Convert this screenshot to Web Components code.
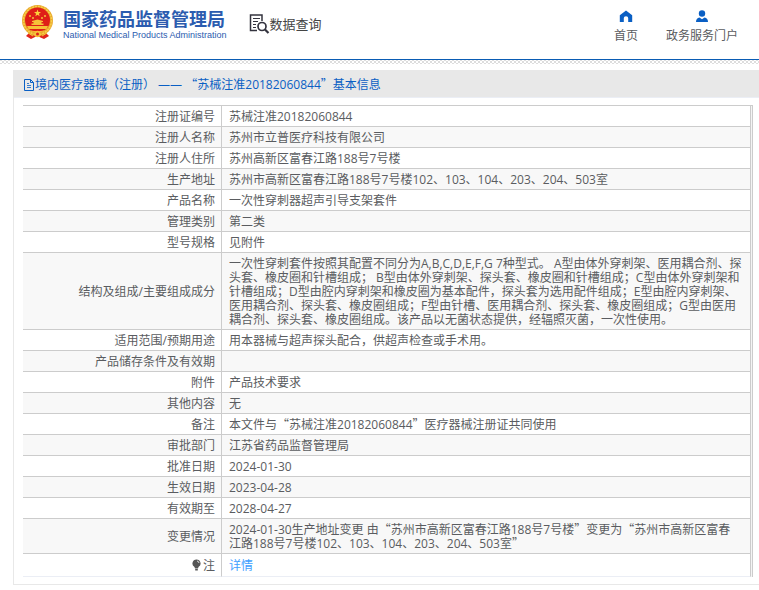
<!DOCTYPE html>
<html lang="zh-CN">
<head>
<meta charset="utf-8">
<title>国家药品监督管理局 - 数据查询</title>
<style>
body {
  margin: 0;
  background: #fff;
  color: #5a5c60;
  font: 12px/14px "Open Sans", "Noto Sans CJK SC", sans-serif;
}
</style>
</head>
<body>
<site-header>
  <nav-link slot="nav" icon="home">首页</nav-link>
  <nav-link slot="nav" icon="user">政务服务门户</nav-link>
</site-header>
<info-panel>
  <span slot="title">境内医疗器械（注册） —— “苏械注准20182060844”基本信息</span>
  <detail-table></detail-table>
</info-panel>

<script>
/* Quotes are full width in Chinese text, so they take the CJK font */
const wideQuotes = text => text.replace(/[“”]/g, '<span class="quote">$&</span>');

const ICONS = {
  home: '<path d="M7 0.5 L0.8 5.2 V12 H4.8 V8 Q4.8 6.2 7 6.2 T9.2 8 V12 H13.2 V5.2 Z"/>',
  user: '<circle cx="7" cy="3.5" r="3.2"/><path d="M1 12 Q1 8 4.5 7.4 L7 9.2 L9.5 7.4 Q13 8 13 12 Z"/>'
};

/* Site Header */

class SiteHeader extends HTMLElement {
  constructor() {
    super();
    this.attachShadow({mode: 'open'}).innerHTML = `
<style>
:host {
  display: block;
}
header {
  display: flex;
  align-items: flex-start;
  height: 59px;
  padding: 0 21px 0 21px;
  box-sizing: border-box;
}
.brand {
  display: flex;
  align-items: flex-start;
  gap: 9px;
  padding-top: 4px;
  color: #2c5caf;
  text-decoration: none;
}
.brand svg {
  width: 33px;
  height: 36px;
}
.name {
  display: block;
  padding-top: 4px;
  font: bold 18px/20px "Noto Sans CJK SC", sans-serif;
}
.english {
  display: block;
  font: 9px/14px "Liberation Sans", sans-serif;
}
.search {
  display: flex;
  align-items: center;
  margin: 0 0 0 22px;
  padding-top: 13px;
  color: #444;
  font: 13px/20px "Noto Sans CJK SC", sans-serif;
}
.search svg {
  width: 21px;
  height: 21px;
}
nav {
  display: flex;
  gap: 28px;
  margin-left: auto;
  padding-top: 10px;
}
.rule {
  height: 4px;
  border-top: 1px solid #0a5cb4;
  background: conic-gradient(#ddd 25%, #fff 0 50%, #ddd 0 75%, #fff 0) 0 1px / 4px 4px;
}
</style>
<header>
  <a class="brand" href="#">
    <svg viewBox="0 0 33 36" aria-hidden="true">
      <path d="M9 28 L5 32 L10 35 L16 32 L23 35 L28 32 L24 28 Z" fill="#df251c"/>
      <circle cx="16.500" cy="16.500" r="15.500" fill="#e9a72c"/>
      <circle cx="16.500" cy="16.500" r="14" fill="none" stroke="#f7d04a" stroke-width="1.500" stroke-dasharray="2 1"/>
      <circle cx="16.500" cy="16" r="12.500" fill="#df1f18"/>
      <path d="M16.500 5.500 l.9 2.500 2.600 .1 -2.100 1.600 .8 2.500 -2.200-1.500 -2.200 1.500 .8-2.500 -2.100-1.600 2.600-.1z" fill="#fbd33c"/>
      <g fill="#f6c238">
        <circle cx="9" cy="12" r="1"/><circle cx="12" cy="14" r="1"/>
        <circle cx="21" cy="14" r="1"/><circle cx="24" cy="12" r="1"/>
        <path d="M11 17 L16.500 15.500 L22 17 V18 H20.500 V19.500 H22.500 V21 H10.500 V19.500 H12.500 V18 H11 Z"/>
        <path d="M6 22 H27 L25.500 25 H7.500 Z"/>
      </g>
      <path d="M10 27 Q16.500 29 23 27" fill="none" stroke="#f6c238"/>
      <circle cx="16.500" cy="30" r="3.200" fill="#f6c238"/>
      <circle cx="16.500" cy="30" r="1.500" fill="#df1f18"/>
      <path d="M7 29 L12 32 M26 29 L21 32" stroke="#f6c238"/>
    </svg>
    <span>
      <span class="name">国家药品监督管理局</span>
      <span class="english">National Medical Products Administration</span>
    </span>
  </a>
  <h1 class="search">
    <svg viewBox="0 0 21 21" fill="none" stroke="#34343f" aria-hidden="true">
      <path d="M13 8 V2 H1.500 V17.500 H8" stroke-width="1.500"/>
      <path d="M4 5.500 H11 M4 8.500 H9 M4 11.500 H7 M4 14.500 H7"/>
      <circle cx="13" cy="13.500" r="4" stroke-width="1.700"/>
      <path d="M16 16.500 L19.500 20" stroke-width="2.200"/>
    </svg>
    数据查询
  </h1>
  <nav><slot name="nav"></slot></nav>
</header>
<div class="rule"></div>`;
  }
}

/* Icon above a caption, in the header */

class NavLink extends HTMLElement {
  constructor() {
    super();
    this.attachShadow({mode: 'open'}).innerHTML = `
<style>
:host {
  display: block;
}
a {
  display: flex;
  flex-direction: column;
  align-items: center;
  gap: 4px;
  color: inherit;
  line-height: 18px;
  text-decoration: none;
}
svg {
  width: 14px;
  height: 13px;
  fill: #0a5fc4;
}
</style>
<a href="#">
  <svg viewBox="0 0 14 13" aria-hidden="true">${ICONS[this.getAttribute('icon')]}</svg>
  <slot></slot>
</a>`;
  }
}

/* Panel with a grey title bar */

class InfoPanel extends HTMLElement {
  constructor() {
    super();
    this.attachShadow({mode: 'open'}).innerHTML = `
<style>
:host {
  display: block;
  margin: 6px 0 5px 13px;
  border: 1px solid #e8e8e8;
  border-width: 0 0 1px 1px;
}
h2 {
  display: flex;
  align-items: center;
  margin: 0;
  padding: 2px 10px 0 9px;
  height: 28px;
  background: #e8e8e8;
  border-bottom: 1px solid #ebeef5;
  box-sizing: border-box;
  color: #0a5fc4;
  font: inherit;
}
h2 svg {
  width: 12px;
  height: 12px;
  fill: none;
  stroke: #0a5fc4;
}
.body {
  padding: 7px 6px 7px 9px;
}
::slotted(span) {
  white-space: pre;
}
</style>
<h2>
  <svg viewBox="0 0 12 12" aria-hidden="true">
    <path d="M1.500 .5 H7.500 L10.500 3.500 V11.500 H1.500 Z M7.500 .5 V3.500 H10.500"/>
    <path d="M4 4.500 H6 M4 6.500 H8 M4 8.500 H8" stroke-opacity=".8"/>
  </svg>
  <slot name="title"></slot>
</h2>
<div class="body"><slot></slot></div>`;
  }

  connectedCallback() {
    const title = this.querySelector('[slot=title]');
    title.innerHTML = wideQuotes(title.textContent);
    title.querySelectorAll('.quote').forEach(quote => {
      quote.style.fontFamily = '"Noto Sans CJK SC", sans-serif';
      quote.style.lineHeight = '0';
    });
  }
}

/* Table of the registration's fields */

const ROWS = [
  ['注册证编号', '苏械注准20182060844'],
  ['注册人名称', '苏州市立普医疗科技有限公司'],
  ['注册人住所', '苏州高新区富春江路188号7号楼'],
  ['生产地址', '苏州市高新区富春江路188号7号楼102、103、104、203、204、503室'],
  ['产品名称', '一次性穿刺器超声引导支架套件'],
  ['管理类别', '第二类'],
  ['型号规格', '见附件'],
  ['结构及组成/主要组成成分', '一次性穿刺套件按照其配置不同分为A,B,C,D,E,F,G 7种型式。 A型由体外穿刺架、医用耦合剂、探头套、橡皮圈和针槽组成； B型由体外穿刺架、探头套、橡皮圈和针槽组成；C型由体外穿刺架和针槽组成；D型由腔内穿刺架和橡皮圈为基本配件，探头套为选用配件组成；E型由腔内穿刺架、医用耦合剂、探头套、橡皮圈组成；F型由针槽、医用耦合剂、探头套、橡皮圈组成；G型由医用耦合剂、探头套、橡皮圈组成。该产品以无菌状态提供，经辐照灭菌，一次性使用。'],
  ['适用范围/预期用途', '用本器械与超声探头配合，供超声检查或手术用。'],
  ['产品储存条件及有效期', ''],
  ['附件', '产品技术要求'],
  ['其他内容', '无'],
  ['备注', '本文件与“苏械注准20182060844”医疗器械注册证共同使用'],
  ['审批部门', '江苏省药品监督管理局'],
  ['批准日期', '2024-01-30'],
  ['生效日期', '2023-04-28'],
  ['有效期至', '2028-04-27'],
  ['变更情况', '2024-01-30生产地址变更 由“苏州市高新区富春江路188号7号楼”变更为“苏州市高新区富春<br>江路188号7号楼102、103、104、203、204、503室”']
];

class DetailTable extends HTMLElement {
  constructor() {
    super();
    const rows = ROWS.map(([label, value]) =>
      `<tr><th scope="row">${label}</th><td>${wideQuotes(value)}</td></tr>`).join('');
    this.attachShadow({mode: 'open'}).innerHTML = `
<style>
:host {
  display: block;
  padding-right: 1px;
  border: 1px solid #ccc;
  border-width: 1px 1px 0 0;
  background: #f4f4f4;
}
table {
  width: 100%;
  table-layout: fixed;
  border-collapse: separate;
  border-spacing: 0;
  background: #fff;
}
th, td {
  height: 14px;
  padding: 4px 6px 2px;
  border-right: 1px solid #ccc;
  border-bottom: 1px solid #ccc;
  font-weight: normal;
  vertical-align: middle;
}
th {
  text-align: right;
}
td {
  padding-left: 7px;
  text-align: left;
}
col:first-child {
  width: 199px;
}
tr:nth-child(even) {
  background: #f8f8f8;
}
tr:last-child > * {
  height: 16px;
  background: #fff;
  border-bottom-color: #ebeef5;
}
.quote {
  font-family: "Noto Sans CJK SC", sans-serif;
  line-height: 0;
}
a {
  color: #409eff;
  text-decoration: none;
}
svg {
  width: 9px;
  height: 12px;
  margin-right: 2px;
  vertical-align: -1px;
}
</style>
<table>
  <colgroup><col><col></colgroup>
  <tbody>${rows}<tr>
    <th scope="row"><svg viewBox="0 0 9 12" aria-hidden="true"><path d="M4.500 .5 A4 4 0 0 1 6.500 8 L6 9.500 H3 L2.500 8 A4 4 0 0 1 4.500 .5 Z M3.200 10 H5.800 V11.500 H3.200 Z" fill="#555"/><path d="M5 2 Q6.800 2.200 7 4" fill="none" stroke="#ddd"/></svg>注</th>
    <td><a href="#">详情</a></td>
  </tr></tbody>
</table>`;
  }
}

customElements.define('site-header', SiteHeader);
customElements.define('nav-link', NavLink);
customElements.define('info-panel', InfoPanel);
customElements.define('detail-table', DetailTable);
</script>
</body>
</html>
